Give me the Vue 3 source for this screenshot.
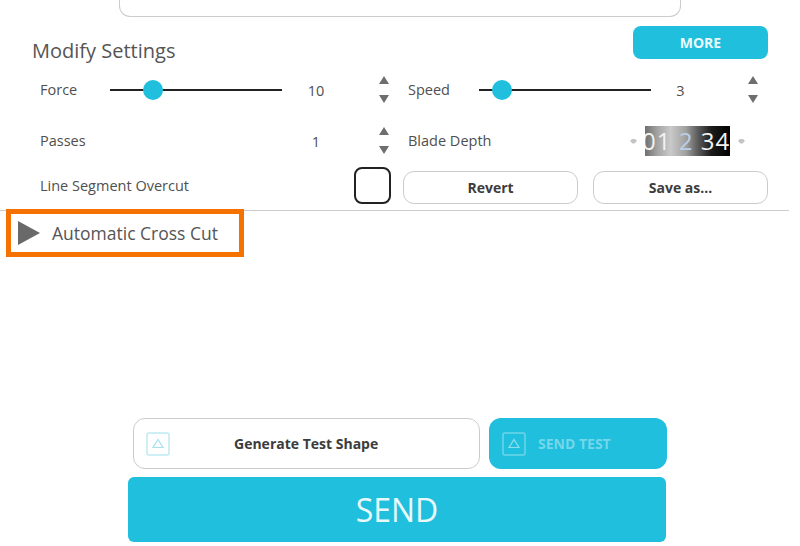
<template>
  <div class="page">
    <div class="top-box"></div>

    <div class="header">
      <h2 class="title">Modify Settings</h2>
      <button class="more">MORE</button>
    </div>

    <div class="row row-sliders">
      <template v-for="s in sliders" :key="s.name">
        <span class="label" :class="s.cls">{{ s.name }}</span>
        <div class="slider">
          <div class="track"></div>
          <div class="thumb" :style="{ left: s.thumb + 'px' }"></div>
        </div>
        <span class="value" :class="s.cls + '-value'">{{ s.value }}</span>
        <div class="stepper" :class="s.cls + '-stepper'">
          <svg width="12" height="30" viewBox="0 0 12 30">
            <path d="M6 1 L11 9 L1 9 Z" fill="#6e6e6e" />
            <path d="M1 20 L11 20 L6 28 Z" fill="#6e6e6e" />
          </svg>
        </div>
      </template>
    </div>

    <div class="row row-passes">
      <span class="label passes">Passes</span>
      <span class="value passes-value">1</span>
      <div class="stepper force-stepper">
        <svg width="12" height="30" viewBox="0 0 12 30">
          <path d="M6 1 L11 9 L1 9 Z" fill="#6e6e6e" />
          <path d="M1 20 L11 20 L6 28 Z" fill="#6e6e6e" />
        </svg>
      </div>
      <span class="label depth">Blade Depth</span>
      <div class="picker">
        <span class="nudge"></span>
        <div class="digits">
          <span class="digit-strip">01 <b>2</b> 34</span>
        </div>
        <span class="nudge"></span>
      </div>
    </div>

    <div class="row row-overcut">
      <span class="label overcut">Line Segment Overcut</span>
      <div class="checkbox"></div>
      <button class="outline revert">Revert</button>
      <button class="outline save">Save as...</button>
    </div>

    <div class="divider"></div>

    <div class="cross-cut">
      <svg width="22" height="24" viewBox="0 0 22 24">
        <path d="M0 0 L22 12 L0 24 Z" fill="#696969" />
      </svg>
      <span>Automatic Cross Cut</span>
    </div>

    <div class="actions">
      <div class="test-row">
        <button class="generate">
          <svg class="test-icon" width="24" height="24" viewBox="0 0 24 24">
            <rect x="1" y="1" width="22" height="22" rx="1.5" fill="none" stroke="#bfeaf2" stroke-width="1.5" />
            <path d="M12 7.5 L17 15.5 L7 15.5 Z" fill="none" stroke="#a5e2ee" stroke-width="1.2" />
          </svg>
          <span>Generate Test Shape</span>
        </button>
        <button class="send-test">
          <svg class="test-icon" width="24" height="24" viewBox="0 0 24 24">
            <rect x="1" y="1" width="22" height="22" rx="1.5" fill="none" stroke="#6fd6ea" stroke-width="1.5" />
            <path d="M12 7.5 L17 15.5 L7 15.5 Z" fill="none" stroke="#8ee0ef" stroke-width="1.2" />
          </svg>
          <span>SEND TEST</span>
        </button>
      </div>
      <button class="send">SEND</button>
    </div>
  </div>
</template>

<script setup>
const sliders = [
  { name: 'Force', cls: 'force', value: 10, thumb: 33 },
  { name: 'Speed', cls: 'speed', value: 3, thumb: 13 },
]
</script>

<style>
html,
body {
  margin: 0;
  background: #fff;
}
</style>

<style scoped>
.page {
  width: 800px;
  height: 546px;
  overflow: hidden;
  box-sizing: border-box;
  font-family: "Open Sans", "Noto Sans", sans-serif;
  color: #4a4a4a;
  background: #fff;
}

button {
  font-family: inherit;
  cursor: pointer;
  padding: 0;
}

.top-box {
  width: 562px;
  height: 17px;
  margin-left: 119px;
  box-sizing: border-box;
  border: 1px solid #ccc;
  border-top: none;
  border-radius: 0 0 11px 11px;
}

.header {
  display: flex;
  justify-content: space-between;
  margin-top: 9px;
  height: 33px;
  padding: 0 32px;
}

.title {
  margin: 11px 0 0;
  font-size: 20px;
  line-height: 27px;
  font-weight: 400;
  color: #555;
}

.more {
  width: 135px;
  height: 33px;
  border: none;
  border-radius: 8px;
  background: #1fbfdd;
  color: #eafafd;
  font-size: 14px;
  font-weight: 700;
}

.row {
  display: flex;
  align-items: center;
  padding-left: 40px;
}

.row-sliders {
  height: 34px;
  margin-top: 14px;
}

.row-passes {
  height: 34px;
  margin-top: 17px;
}

.row-overcut {
  height: 37px;
  margin-top: 9px;
}

.label {
  font-size: 14.5px;
  line-height: 20px;
  color: #4f4f4f;
  white-space: nowrap;
}

.force {
  width: 70px;
}

.speed {
  width: 71px;
}

.passes {
  width: 242px;
}

.depth {
  width: 222px;
}

.overcut {
  width: 314px;
}

.slider {
  position: relative;
  width: 172px;
  height: 20px;
}

.track {
  position: absolute;
  left: 0;
  right: 0;
  top: 9px;
  height: 2px;
  background: #222;
}

.thumb {
  position: absolute;
  top: 0;
  width: 20px;
  height: 20px;
  border-radius: 50%;
  background: #1fbfdd;
}

.value {
  font-size: 14.5px;
  text-align: center;
  color: #4f4f4f;
}

.force-value,
.passes-value {
  width: 68px;
}

.speed-value {
  width: 59px;
}

.stepper {
  display: flex;
  justify-content: center;
  width: 20px;
}

.force-stepper {
  margin-left: 24px;
  margin-right: 14px;
}

.speed-stepper {
  margin-left: 33px;
}

.picker {
  display: flex;
  align-items: center;
  gap: 8px;
}

.nudge {
  width: 7px;
  height: 5px;
  background: #c4c4c4;
  clip-path: polygon(0 50%, 35% 0, 65% 0, 100% 50%, 65% 100%, 35% 100%);
}

.digits {
  width: 85px;
  height: 30px;
  overflow: hidden;
  background: linear-gradient(90deg, #6f6f6f 0, #a5a5a5 15%, #c9c9c9 30%, #a0a0a0 48%, #5c5c5c 62%, #1c1c1c 78%, #000 100%);
}

.digit-strip {
  display: block;
  margin-left: -3px;
  font-size: 24px;
  line-height: 30px;
  letter-spacing: 1px;
  color: #f2f2f2;
  white-space: nowrap;
}

.digit-strip b {
  font-weight: 400;
  color: #b9cfe6;
}

.checkbox {
  box-sizing: border-box;
  width: 37px;
  height: 37px;
  border: 2px solid #222;
  border-radius: 8px;
}

.outline {
  box-sizing: border-box;
  width: 175px;
  height: 33px;
  margin-top: 3px;
  border: 1.5px solid #ccc;
  border-radius: 11px;
  background: #fff;
  color: #3c3c3c;
  font-size: 14px;
  font-weight: 700;
}

.revert {
  margin-left: 12px;
}

.save {
  margin-left: 15px;
}

.divider {
  width: 789px;
  height: 1px;
  margin-top: 6px;
  background: #ccc;
}

.cross-cut {
  box-sizing: border-box;
  display: flex;
  align-items: center;
  gap: 12px;
  width: 238px;
  height: 48px;
  margin: -2px 0 0 6px;
  padding-left: 7px;
  border: 5px solid #f57200;
  color: #555;
  font-size: 17.5px;
}

.actions {
  margin-top: 161px;
  margin-left: 128px;
}

.test-row {
  display: flex;
  gap: 9px;
  margin-left: 5px;
}

.generate {
  box-sizing: border-box;
  display: flex;
  align-items: center;
  width: 347px;
  height: 51px;
  padding-left: 12px;
  border: 1.5px solid #ccc;
  border-radius: 12px;
  background: #fff;
  color: #3c3c3c;
  font-size: 14px;
  font-weight: 700;
}

.generate span {
  margin-left: 64px;
}

.send-test {
  display: flex;
  align-items: center;
  width: 178px;
  height: 51px;
  padding-left: 13px;
  border: none;
  border-radius: 12px;
  background: #1fbfdd;
  color: #74d7ea;
  font-size: 14px;
  font-weight: 700;
}

.send-test span {
  margin-left: 12px;
}

.send {
  display: block;
  width: 538px;
  height: 65px;
  margin-top: 8px;
  border: none;
  border-radius: 6px;
  background: #1fbfdd;
  color: #e8f9fc;
  font-size: 32px;
  font-weight: 400;
}
</style>
